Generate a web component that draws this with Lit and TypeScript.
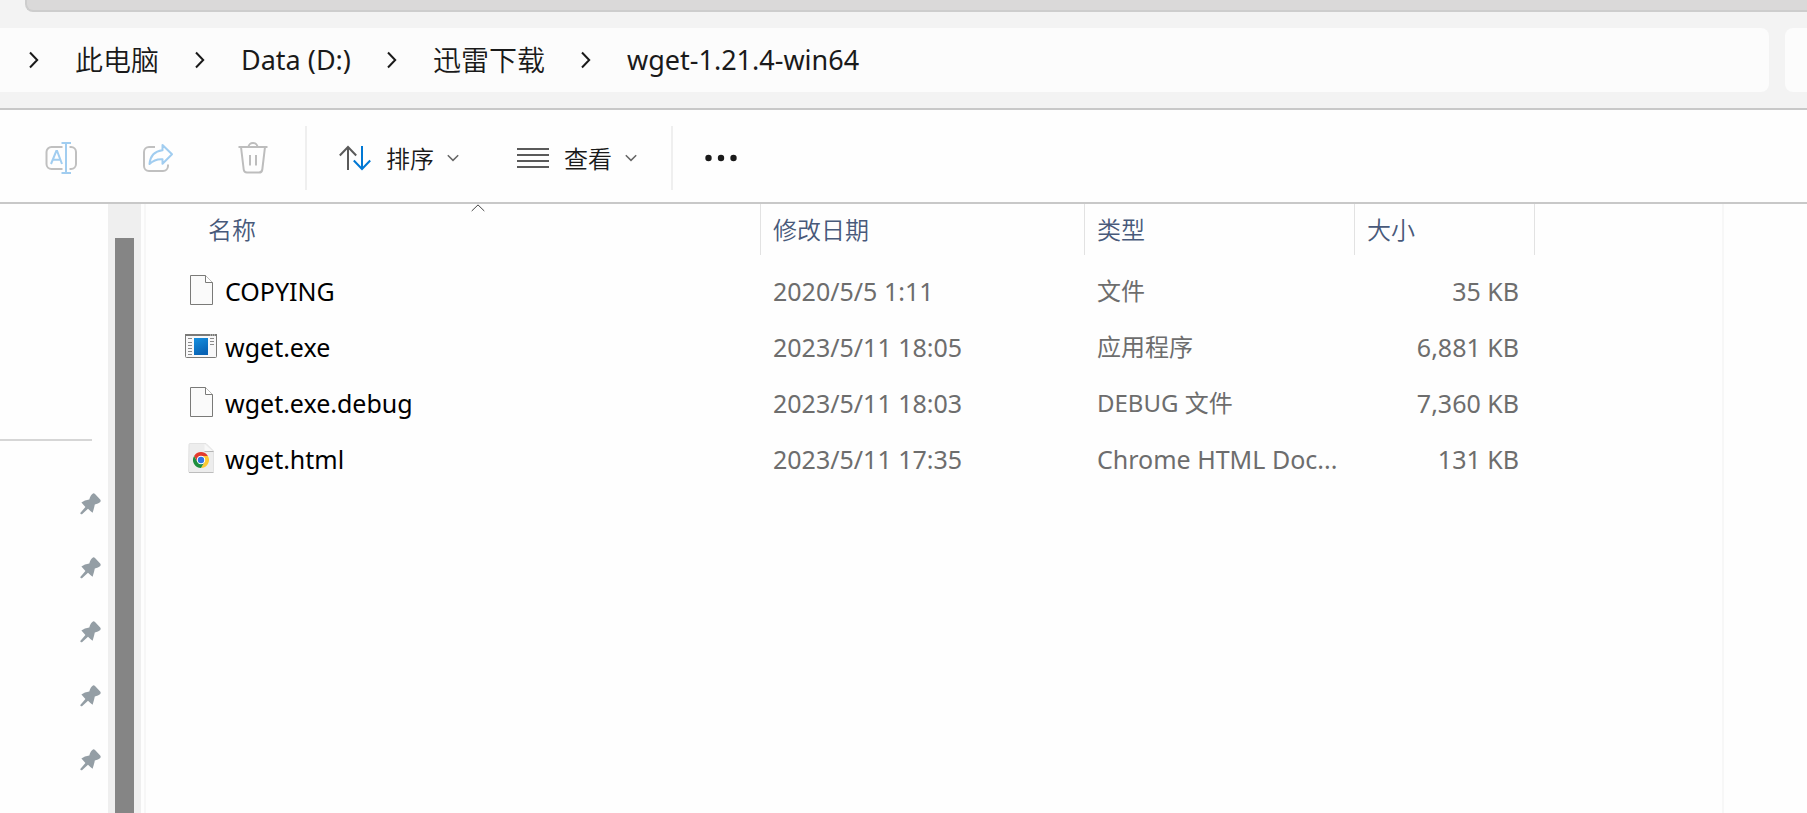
import { LitElement, html, css, svg, TemplateResult } from "lit";
import { customElement, property } from "lit/decorators.js";

type IconName = "file" | "exe" | "chrome";

interface FileRow {
  name: string;
  date: string;
  type: string;
  size: string;
  icon: IconName;
}

const crumbs = ["此电脑", "Data (D:)", "迅雷下载", "wget-1.21.4-win64"];

const files: FileRow[] = [
  { name: "COPYING", date: "2020/5/5 1:11", type: "文件", size: "35 KB", icon: "file" },
  { name: "wget.exe", date: "2023/5/11 18:05", type: "应用程序", size: "6,881 KB", icon: "exe" },
  { name: "wget.exe.debug", date: "2023/5/11 18:03", type: "DEBUG 文件", size: "7,360 KB", icon: "file" },
  { name: "wget.html", date: "2023/5/11 17:35", type: "Chrome HTML Doc...", size: "131 KB", icon: "chrome" },
];

const isLatin = (text: string) => /^[\x20-\x7e]+$/.test(text);

const base = css`
  :host {
    font-family: "Noto Sans", "Noto Sans CJK SC", sans-serif;
    font-weight: 350;
    box-sizing: border-box;
  }
  *, *::before, *::after { box-sizing: border-box; }
  button {
    font: inherit;
    color: inherit;
    background: none;
    border: 0;
    padding: 0;
    margin: 0;
    text-align: left;
  }
  svg { display: block; flex: none; }
`;

@customElement("address-bar")
class AddressBar extends LitElement {
  static styles = [
    base,
    css`
      :host { display: block; background: #f3f3f3; border-bottom: 2px solid #c8c8c8; }
      .tabs { margin-left: 25px; height: 12px; background: #dad9d9; border: solid #cdcdcd; border-width: 0 0 2px 2px; border-bottom-left-radius: 8px; }
      .row { display: flex; gap: 16px; padding: 16px 0; }
      .path {
        flex: 1;
        min-width: 0;
        height: 64px;
        background: #fcfcfc;
        border-radius: 0 8px 8px 0;
        display: flex;
        align-items: center;
        padding-left: 28px;
      }
      .crumb { display: flex; align-items: center; }
      .crumb a {
        margin: 0 35px 0 36px;
        font-size: 28px;
        line-height: 40px;
        color: #1a1a1a;
        text-decoration: none;
        white-space: nowrap;
      }
      .crumb.latin a { font-size: 27px; font-weight: 400; }
      .search { width: 22px; height: 64px; border: 0; padding: 0; background: #fcfcfc; border-radius: 8px 0 0 8px; }
    `,
  ];

  render() {
    return html`
      <div class="tabs"></div>
      <div class="row">
        <nav class="path" aria-label="路径">
          ${crumbs.map(
            (c) => html`<span class="crumb ${isLatin(c) ? "latin" : ""}">
              <svg width="11" height="18" viewBox="0 0 11 18" fill="none" stroke="#1a1a1a" stroke-width="2"><path d="M2 1.5 9.2 9 2 16.5" /></svg>
              <a href="#">${c}</a>
            </span>`
          )}
        </nav>
        <input class="search" type="search" aria-label="搜索" />
      </div>
    `;
  }
}

const chevron = svg`<svg width="12" height="8" viewBox="0 0 12 8" fill="none" stroke="#666" stroke-width="1.5"><path d="M.8 1.2 6 6.4l5.200-5.200" /></svg>`;

@customElement("command-bar")
class CommandBar extends LitElement {
  static styles = [
    base,
    css`
      :host { display: flex; align-items: center; height: 94px; padding: 4px 0 0 29px; background: #fefefe; border-bottom: 2px solid #c8c8c8; color: #1a1a1a; }
      .icons { display: flex; gap: 32px; }
      .icon { width: 64px; height: 64px; display: grid; place-items: center; }
      .menu { display: flex; align-items: center; height: 64px; padding: 0 16px; font-size: 24px; line-height: 34px; }
      .menu span { margin: 0 13px 0 15px; padding-top: 2px; white-space: nowrap; }
      .menus { display: flex; gap: 26px; }
      .sep { width: 2px; height: 64px; margin: 0 16px 0 18px; background: #efefef; flex: none; }
      .first { margin-left: 20px; }
    `,
  ];

  render() {
    return html`
      <div class="icons">
        <button class="icon" aria-label="重命名" disabled>
          <svg width="34" height="34" viewBox="0 0 34 34" fill="none" stroke-width="2">
            <path stroke="#c0c0c0" d="M18.500 6H7.500A5 5 0 0 0 2.500 11V23A5 5 0 0 0 7.500 28H18.500M25.500 6H27A5 5 0 0 1 32 11V23A5 5 0 0 1 27 28H25.500" />
            <path stroke="#a1cdf0" d="M17.500 2H27M22 2V32M17.500 32H27" />
            <path stroke="#a1cdf0" d="M7 23 12.300 10h.8L18 23M8.700 18.700h7.900" />
          </svg>
        </button>
        <button class="icon" aria-label="共享" disabled>
          <svg width="34" height="34" viewBox="0 0 34 34" fill="none" stroke-width="2" stroke-linejoin="round">
            <path stroke="#c0c0c0" d="M15 6H9A5 5 0 0 0 4 11V25A5 5 0 0 0 9 30H23A5 5 0 0 0 28 25V23.500" />
            <path stroke="#a1cdf0" d="M22.500 4 32 13.300 22.500 22.800V18.200C17 17.800 13 19.500 9.500 23 10.200 15.500 14.500 10 22.500 9.200Z" />
          </svg>
        </button>
        <button class="icon" aria-label="删除" disabled>
          <svg width="34" height="34" viewBox="0 0 34 34" fill="none" stroke="#bdbdbd" stroke-width="2">
            <path d="M2.500 6H31.500M12.500 6a4.500 4 0 0 1 9 0M5 6 7.700 28.500Q8.100 31.500 11 31.500H23Q25.900 31.500 26.300 28.500L29 6M14 14V24.500M20 14V24.500" />
          </svg>
        </button>
      </div>
      <div class="sep first"></div>
      <div class="menus">
        <button class="menu">
          <svg width="32" height="26" viewBox="0 0 32 26" fill="none" stroke-width="2">
            <path stroke="#5a5a5a" d="M9 25V2M.8 10.500 9 2l8.200 8.500" />
            <path stroke="#0078d4" d="M23 1V24M14.800 15.500 23 24l8.200-8.500" />
          </svg>
          <span>排序</span>${chevron}
        </button>
        <button class="menu">
          <svg width="32" height="26" viewBox="0 0 32 26" stroke="#5a5a5a" stroke-width="2"><path d="M0 4H32M0 10H32M0 16H32M0 22H32" /></svg>
          <span>查看</span>${chevron}
        </button>
      </div>
      <div class="sep"></div>
      <button class="icon" aria-label="更多">
        <svg width="34" height="8" viewBox="0 0 34 8" fill="#1a1a1a"><circle cx="4.500" cy="4" r="3.200" /><circle cx="17" cy="4" r="3.200" /><circle cx="29.500" cy="4" r="3.200" /></svg>
      </button>
    `;
  }
}

@customElement("nav-pane")
class NavPane extends LitElement {
  static styles = [
    base,
    css`
      :host { display: flex; flex: none; width: 146px; border-right: 2px solid #f7f7f7; }
      .tree { width: 108px; padding-top: 235px; }
      hr { height: 2px; margin: 0 16px 0 0; border: 0; background: #d6d6d6; }
      ul { list-style: none; margin: 31px 0 0; padding: 0; }
      li { height: 64px; display: flex; align-items: center; justify-content: flex-end; padding-right: 7px; }
      .track { width: 33px; background: #efefef; padding: 34px 7px 0; display: flex; }
      .thumb { flex: 1; background: #858585; }
    `,
  ];

  render() {
    return html`
      <div class="tree">
        <hr />
        <ul>
          ${[0, 1, 2, 3, 4].map(
            () => html`<li>
              <svg width="21" height="22" viewBox="0 0 21 22" fill="#949ea5">
                <path d="M13 .4Q14.200.2 15 1L20.200 6.400Q21.300 8 20 9.300 18.500 10.700 14.800 11.600 14.200 15 12.600 19.700 10.800 18.700 8 15.800L2 21.200Q.2 21.600.3 19.900L5.400 14 1.400 9.600Q4.500 7.200 9.300 6.600 10.400 1.700 13 .4Z" />
              </svg>
            </li>`
          )}
        </ul>
      </div>
      <div class="track"><div class="thumb"></div></div>
    `;
  }
}

@customElement("file-icon")
class FileIcon extends LitElement {
  @property() kind: IconName = "file";

  static styles = [base, css`:host { display: block; width: 32px; height: 32px; flex: none; }`];

  private readonly art: Record<IconName, TemplateResult> = {
    file: svg`
      <path d="M5.500 .5H20.500L27.500 7.500V29.500H5.500Z" fill="#fafafa" stroke="#7a7a78" />
      <path d="M20.500 .5V7.500H27.500" fill="#fff" stroke="#7a7a78" />`,
    exe: svg`
      <defs><linearGradient id="blue" x1="0" y1="0" x2="0.4" y2="1"><stop offset="0" stop-color="#1590e0" /><stop offset="1" stop-color="#0863b5" /></linearGradient></defs>
      <rect x=".5" y="3.500" width="31" height="23" rx="1" fill="#f8f8f9" stroke="#7a7a78" />
      <path d="M0 4H32" stroke="#7a7a78" stroke-width="2" />
      <path d="M25 4h1m1 0h1m1 0h1" stroke="#ddd" />
      <path d="M3 7.500h4M3 11.500h4M3 14.500h4M3 17.500h4M3 20.500h4M3 23.500h4M25 7.500h4M25 10.500h4M25 13.500h4" stroke="#8b8b8b" />
      <rect x="9" y="7" width="14" height="17" fill="url(#blue)" />`,
    chrome: svg`
      <path d="M4 1.500Q4 .5 5 .5H21L28.500 8V28.500Q28.500 29.500 27.500 29.500H5Q3.500 29.500 3.500 28.500Z" fill="#ededed" stroke="#e2e2e2" />
      <path d="M4 29.500H28.500" stroke="#bdbdbd" />
      <path d="M19.500 1V8.500H28Z" fill="#f8f8f8" /><path d="M19.500 8.500H28.500" stroke="#b5b5b5" />
      <circle cx="16" cy="17" r="8" fill="#fff" />
      <path d="M9.070 13A8 8 0 0 1 22.930 13H16A4 4 0 0 0 12.540 19Z" fill="#e33b2e" />
      <path d="M22.930 13A8 8 0 0 1 16 25L19.460 19A4 4 0 0 0 16 13Z" fill="#fcc934" />
      <path d="M16 25A8 8 0 0 1 9.070 13L12.540 19A4 4 0 0 0 19.460 19Z" fill="#1e8e3e" />
      <circle cx="16" cy="17" r="4.200" fill="#fff" /><circle cx="16" cy="17" r="3.200" fill="#2f74e6" />`,
  };

  render() {
    return html`<svg width="32" height="32" viewBox="0 0 32 32">${this.art[this.kind]}</svg>`;
  }
}

@customElement("file-list")
class FileList extends LitElement {
  static styles = [
    base,
    css`
      :host { display: block; flex: 1; min-width: 0; overflow: hidden; }
      table { border-collapse: separate; border-spacing: 0; table-layout: fixed; width: 1389px; font-size: 24px; line-height: 34px; }
      .c-name { width: 615px; }
      .c-date { width: 324px; }
      .c-type { width: 270px; }
      .c-size { width: 180px; }
      th { height: 51px; padding: 0 12px; border-right: 1px solid #e2e2e2; font-weight: inherit; text-align: left; color: #48597a; position: relative; }
      th:first-child { padding-left: 62px; }
      .caret { position: absolute; top: 0; right: 275px; }
      td { height: 56px; padding: 0 12px; color: #6d6d6d; white-space: nowrap; }
      td.latin { font-size: 25px; font-weight: 400; }
      tbody::before { content: ""; display: block; height: 8px; }
      .name { display: flex; align-items: center; gap: 8px; padding-left: 27px; color: #000; }
      .size { text-align: right; padding-right: 16px; }
      .mixed { font-weight: 400; }
    `,
  ];

  render() {
    return html`
      <table>
        <colgroup><col class="c-name" /><col class="c-date" /><col class="c-type" /><col class="c-size" /></colgroup>
        <thead>
          <tr>
            <th aria-sort="ascending">
              <button>名称</button>
              <svg class="caret" width="14" height="8" viewBox="0 0 14 8" fill="none" stroke="#444"><path d="M.7 7 7 .9 13.300 7" /></svg>
            </th>
            <th><button>修改日期</button></th>
            <th><button>类型</button></th>
            <th><button>大小</button></th>
          </tr>
        </thead>
        <tbody>
          ${files.map(
            (f) => html`<tr>
              <td class="latin"><div class="name"><file-icon .kind=${f.icon}></file-icon><span>${f.name}</span></div></td>
              <td class="latin">${f.date}</td>
              <td class=${isLatin(f.type) ? "latin" : "mixed"}>${f.type}</td>
              <td class="latin size">${f.size}</td>
            </tr>`
          )}
        </tbody>
      </table>
    `;
  }
}

@customElement("app-root")
class AppRoot extends LitElement {
  static styles = [
    base,
    css`
      :host { display: flex; flex-direction: column; height: 100vh; overflow: hidden; background: #fefefe; }
      .body { flex: 1; min-height: 0; display: flex; overflow: hidden; }
      .details { width: 85px; flex: none; border-left: 2px solid #f7f7f7; }
    `,
  ];

  render() {
    return html`
      <address-bar></address-bar>
      <command-bar></command-bar>
      <div class="body">
        <nav-pane></nav-pane>
        <file-list></file-list>
        <aside class="details"></aside>
      </div>
    `;
  }
}
